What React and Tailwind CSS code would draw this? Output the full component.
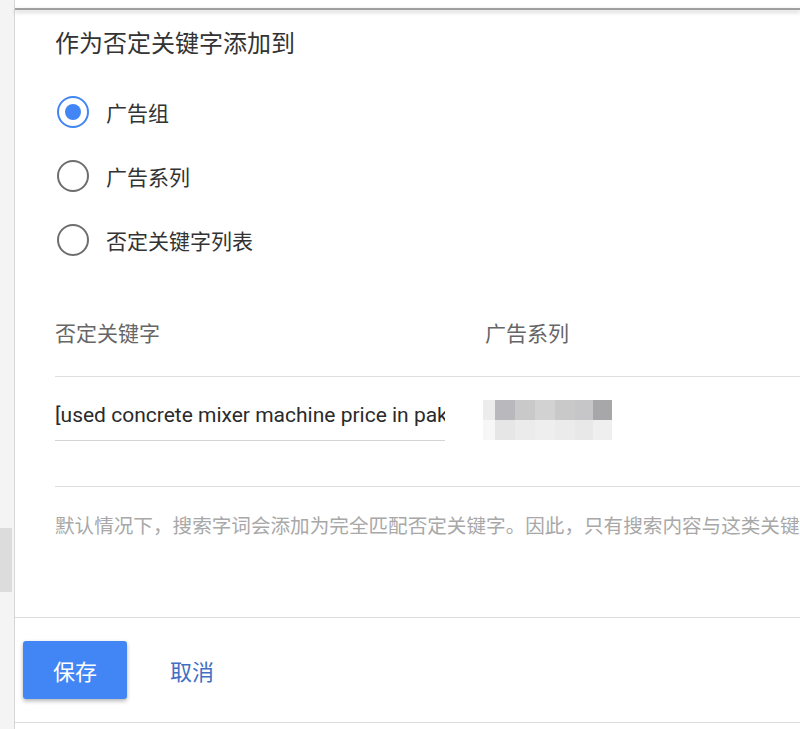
import React from "react";

const cjk = { fontFamily: '"Noto Sans CJK SC", "Noto Sans", sans-serif' };
const latin = { fontFamily: 'Roboto, "Noto Sans CJK SC", sans-serif' };

function Radio({ checked, label }) {
  return (
    <div className="flex items-center h-[64px]">
      <div
        className={
          "w-[32px] h-[32px] rounded-full flex items-center justify-center border-[2.5px] " +
          (checked ? "border-[#4285f4]" : "border-[#6e6e6e]")
        }
      >
        {checked && <div className="w-[16px] h-[16px] rounded-full bg-[#4285f4]" />}
      </div>
      <span className="ml-[17px] text-[21px] leading-[30px] text-[#333]">{label}</span>
    </div>
  );
}

const blurTop = ["#ececec", "#b9b8bc", "#c9c9c9", "#d2d2d2", "#c9c9c9", "#c6c6c9", "#a7a7aa"];
const blurBottom = ["#f7f7f7", "#e6e6e6", "#ebebeb", "#eeeeee", "#ebebeb", "#e8e8e8", "#efefef"];
const blurW = [12, 20, 20, 20, 20, 18, 19];

export default function App() {
  return (
    <div className="flex w-[800px] h-[729px] bg-white overflow-hidden" style={cjk}>
      {/* left strip */}
      <div className="w-[14px] bg-[#f4f4f4] flex flex-col">
        <div className="h-[528px]" />
        <div className="h-[64px] w-[12px] bg-[#dcdcdc]" />
      </div>
      <div className="w-px bg-[#d6d6d6]" />
      {/* dialog */}
      <div className="flex-1 flex flex-col min-w-0">
        <div className="h-[8px] bg-white" />
        <div className="h-[2px] bg-[#a0a0a0] shadow-[0_2px_4px_rgba(0,0,0,0.25)]" />
        <div className="pl-[40px] flex flex-col">
          <div className="mt-[16px] text-[24px] leading-[32px] text-[#333]">作为否定关键字添加到</div>
          <div className="mt-[22px] flex flex-col pl-[2px]">
            <Radio checked label="广告组" />
            <Radio label="广告系列" />
            <Radio label="否定关键字列表" />
          </div>
          {/* table header */}
          <div className="mt-[44px] flex border-b border-[#dedede] pb-[28px] text-[21px] leading-[32px] text-[#666]">
            <div className="w-[430px]">否定关键字</div>
            <div>广告系列</div>
          </div>
          {/* table row */}
          <div className="flex border-b border-[#dedede] h-[110px] pt-[23px]">
            <div className="w-[430px]">
              <div className="w-[390px] border-b border-[#d4d4d4] pb-[10px] overflow-hidden">
                <div
                  className="whitespace-nowrap text-[21px] leading-[30px] text-[#2a2a2a]"
                  style={latin}
                >
                  [used concrete mixer machine price in pak
                </div>
              </div>
            </div>
            <div className="flex flex-col -ml-[2px]">
              <div className="flex h-[20px]">
                {blurTop.map((c, i) => (
                  <div key={i} className="h-full" style={{ width: blurW[i], background: c }} />
                ))}
              </div>
              <div className="flex h-[20px]">
                {blurBottom.map((c, i) => (
                  <div key={i} className="h-full" style={{ width: blurW[i], background: c }} />
                ))}
              </div>
            </div>
          </div>
          {/* helper */}
          <div className="mt-[24px] whitespace-nowrap text-[19.6px] leading-[28px] text-[#a8a8a8]">
            默认情况下，搜索字词会添加为完全匹配否定关键字。因此，只有搜索内容与这类关键字
          </div>
        </div>
        {/* footer */}
        <div className="mt-[78px] border-t border-[#dcdcdc] h-[106px] flex items-start pl-[8px] pt-[23px] border-b">
          <button className="w-[104px] h-[58px] rounded-[3px] bg-[#4285f4] text-white text-[22px] shadow-[0_2px_4px_rgba(0,0,0,0.3)]">
            保存
          </button>
          <button className="ml-[43px] h-[58px] text-[22px] text-[#3f70c4]">取消</button>
        </div>
      </div>
    </div>
  );
}
